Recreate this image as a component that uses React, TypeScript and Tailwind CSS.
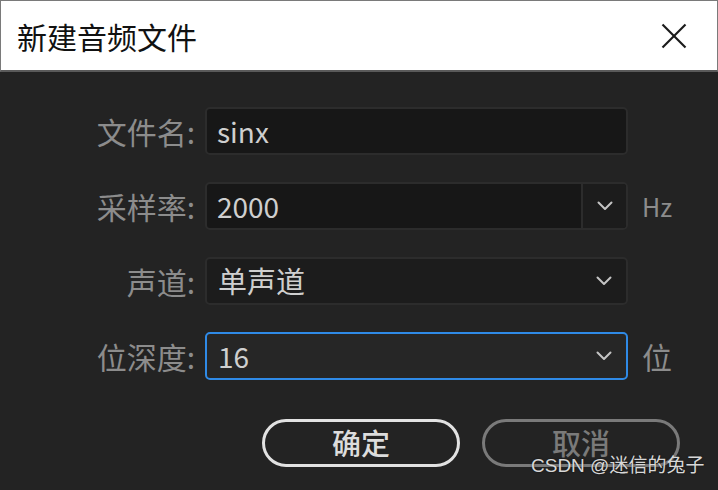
import React from "react";

const font = { fontFamily: '"Noto Sans CJK SC", "Noto Sans", sans-serif' };

function Chevron() {
  return (
    <svg width="16" height="10" viewBox="0 0 16 10" fill="none">
      <polyline points="1.5,1.5 8,8 14.5,1.5" stroke="#c4c4c4" strokeWidth="2" strokeLinecap="round" strokeLinejoin="round" />
    </svg>
  );
}

export default function App() {
  return (
    <div className="relative w-[718px] h-[490px] overflow-hidden bg-[#232323]" style={font}>
      <div className="h-[72px] bg-white border border-[#7a7a7a] border-b-2 border-b-[#5a5a5a] flex items-center justify-between pl-[16px] pr-[30px]">
        <span className="text-[30px] leading-none text-[#111]">新建音频文件</span>
        <svg width="26" height="26" viewBox="0 0 26 26">
          <line x1="1.5" y1="1.5" x2="24.5" y2="24.5" stroke="#1a1a1a" strokeWidth="2.2" />
          <line x1="24.5" y1="1.5" x2="1.5" y2="24.5" stroke="#1a1a1a" strokeWidth="2.2" />
        </svg>
      </div>

      <div className="grid grid-cols-[195px_423px_auto] gap-x-[10px] gap-y-[27px] pt-[35px] items-center">
        <div className="text-right text-[30px] leading-none text-[#8c8c8c]">文件名:</div>
        <div className="h-[48px] rounded-[5px] border-2 border-[#2c2c2c] bg-[#171717] flex items-center pl-[10px] text-[28px] text-[#cfcfcf]">sinx</div>
        <div />

        <div className="text-right text-[30px] leading-none text-[#8c8c8c]">采样率:</div>
        <div className="h-[48px] rounded-[5px] border-2 border-[#2c2c2c] bg-[#171717] flex overflow-hidden">
          <div className="flex-1 flex items-center pl-[10px] text-[28px] text-[#cfcfcf]">2000</div>
          <div className="w-[45px] border-l-2 border-[#2c2c2c] bg-[#1c1c1c] flex items-center justify-center">
            <Chevron />
          </div>
        </div>
        <div className="text-[25px] leading-none text-[#8c8c8c] pl-[4px]">Hz</div>

        <div className="text-right text-[30px] leading-none text-[#8c8c8c]">声道:</div>
        <div className="h-[48px] rounded-[5px] border-2 border-[#2c2c2c] bg-[#1c1c1c] flex items-center justify-between pl-[11px] pr-[14px] text-[29px] text-[#cfcfcf]">
          <span>单声道</span>
          <Chevron />
        </div>
        <div />

        <div className="text-right text-[30px] leading-none text-[#8c8c8c]">位深度:</div>
        <div className="h-[48px] rounded-[5px] border-2 border-[#2f8ae6] bg-[#262626] flex items-center justify-between pl-[11px] pr-[14px] text-[28px] text-[#cfcfcf]">
          <span>16</span>
          <Chevron />
        </div>
        <div className="text-[30px] leading-none text-[#8c8c8c] pl-[4px]">位</div>
      </div>

      <div className="flex gap-[22px] pl-[262px] pt-[39px]">
        <div className="w-[198px] h-[48px] rounded-full border-[3px] border-[#e2e2e2] flex items-center justify-center text-[29px] font-medium text-[#dcdcdc]">确定</div>
        <div className="w-[198px] h-[48px] rounded-full border-[3px] border-[#7a7a7a] flex items-center justify-center text-[29px] font-medium text-[#7a7a7a]">取消</div>
      </div>

      <div
        className="absolute left-[531px] top-[456px] text-[19px] leading-none text-[#d8d8d8] [text-shadow:0_0_2px_rgba(0,0,0,0.6)]"
        style={{ fontFamily: '"Liberation Sans", "Noto Sans CJK SC", sans-serif' }}
      >
        CSDN @迷信的兔子
      </div>
    </div>
  );
}
